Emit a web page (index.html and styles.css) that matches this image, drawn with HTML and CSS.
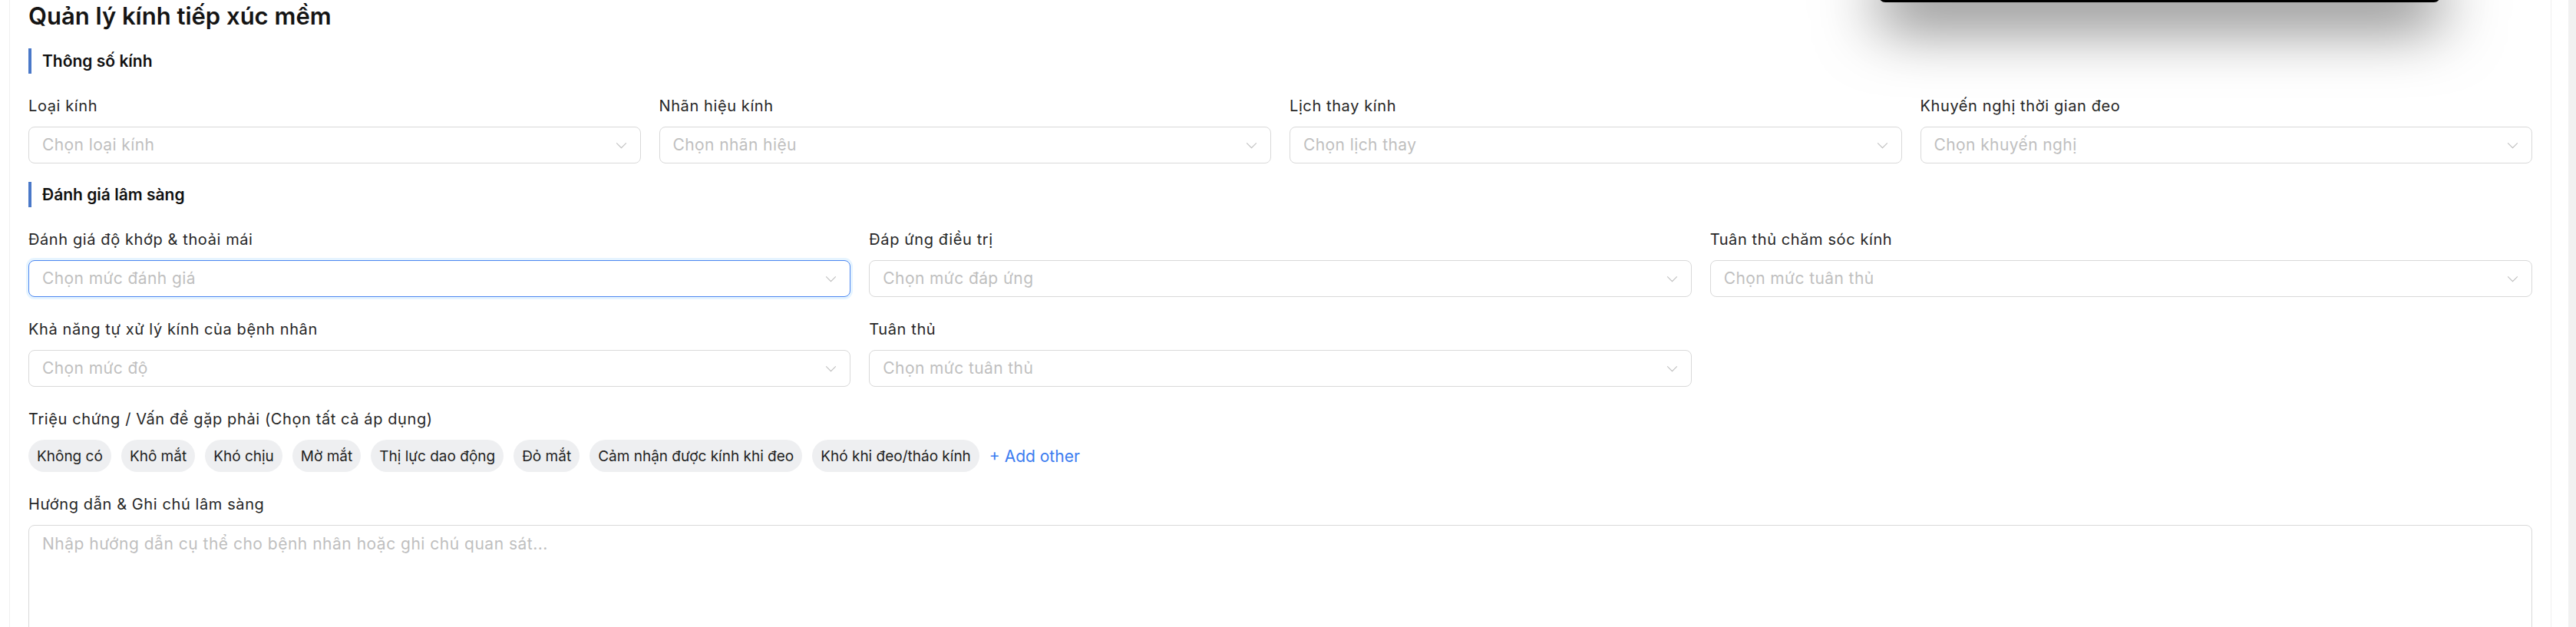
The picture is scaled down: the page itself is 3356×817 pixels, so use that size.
FILE: index.html
```html
<!DOCTYPE html>
<html lang="vi">
<head>
<meta charset="utf-8">
<title>Quản lý kính tiếp xúc mềm</title>
<link rel="stylesheet" href="styles.css">
</head>
<body>
  <main class="panel">
    <h1 class="page-title">Quản lý kính tiếp xúc mềm</h1>

    <section class="section">
      <h2 class="section-title">Thông số kính</h2>
      <div class="grid grid-4">
        <div class="field">
          <label class="field-label">Loại kính</label>
          <div class="select"><span class="placeholder">Chọn loại kính</span><svg class="chevron" viewBox="0 0 16 10"><path d="M1 1.5 8 8.5 15 1.5"/></svg></div>
        </div>
        <div class="field">
          <label class="field-label">Nhãn hiệu kính</label>
          <div class="select"><span class="placeholder">Chọn nhãn hiệu</span><svg class="chevron" viewBox="0 0 16 10"><path d="M1 1.5 8 8.5 15 1.5"/></svg></div>
        </div>
        <div class="field">
          <label class="field-label">Lịch thay kính</label>
          <div class="select"><span class="placeholder">Chọn lịch thay</span><svg class="chevron" viewBox="0 0 16 10"><path d="M1 1.5 8 8.5 15 1.5"/></svg></div>
        </div>
        <div class="field">
          <label class="field-label">Khuyến nghị thời gian đeo</label>
          <div class="select"><span class="placeholder">Chọn khuyến nghị</span><svg class="chevron" viewBox="0 0 16 10"><path d="M1 1.5 8 8.5 15 1.5"/></svg></div>
        </div>
      </div>
    </section>

    <section class="section">
      <h2 class="section-title">Đánh giá lâm sàng</h2>
      <div class="grid grid-3">
        <div class="field">
          <label class="field-label">Đánh giá độ khớp &amp; thoải mái</label>
          <div class="select is-focused"><span class="placeholder">Chọn mức đánh giá</span><svg class="chevron" viewBox="0 0 16 10"><path d="M1 1.5 8 8.5 15 1.5"/></svg></div>
        </div>
        <div class="field">
          <label class="field-label">Đáp ứng điều trị</label>
          <div class="select"><span class="placeholder">Chọn mức đáp ứng</span><svg class="chevron" viewBox="0 0 16 10"><path d="M1 1.5 8 8.5 15 1.5"/></svg></div>
        </div>
        <div class="field">
          <label class="field-label">Tuân thủ chăm sóc kính</label>
          <div class="select"><span class="placeholder">Chọn mức tuân thủ</span><svg class="chevron" viewBox="0 0 16 10"><path d="M1 1.5 8 8.5 15 1.5"/></svg></div>
        </div>
        <div class="field">
          <label class="field-label">Khả năng tự xử lý kính của bệnh nhân</label>
          <div class="select"><span class="placeholder">Chọn mức độ</span><svg class="chevron" viewBox="0 0 16 10"><path d="M1 1.5 8 8.5 15 1.5"/></svg></div>
        </div>
        <div class="field">
          <label class="field-label">Tuân thủ</label>
          <div class="select"><span class="placeholder">Chọn mức tuân thủ</span><svg class="chevron" viewBox="0 0 16 10"><path d="M1 1.5 8 8.5 15 1.5"/></svg></div>
        </div>

        <div class="field span-all">
          <label class="field-label">Triệu chứng / Vấn đề gặp phải (Chọn tất cả áp dụng)</label>
          <div class="chips">
            <span class="chip">Không có</span>
            <span class="chip">Khô mắt</span>
            <span class="chip">Khó chịu</span>
            <span class="chip">Mờ mắt</span>
            <span class="chip">Thị lực dao động</span>
            <span class="chip">Đỏ mắt</span>
            <span class="chip">Cảm nhận được kính khi đeo</span>
            <span class="chip">Khó khi đeo/tháo kính</span>
            <span class="add-other">+ Add other</span>
          </div>
        </div>

        <div class="field span-all">
          <label class="field-label">Hướng dẫn &amp; Ghi chú lâm sàng</label>
          <textarea class="notes" placeholder="Nhập hướng dẫn cụ thể cho bệnh nhân hoặc ghi chú quan sát..."></textarea>
        </div>
      </div>
    </section>
  </main>
  <div class="scroll-track"></div>

  <!-- popover hanging from the top edge -->
  <div class="popover"></div>
</body>
</html>
```

FILE: styles.css
```css
html,
body {
  margin: 0;
  height: 100%;
  overflow: hidden;
  background: #ffffff;
}

body {
  display: flex;
  position: relative;
  font-family: Inter, "Noto Sans", sans-serif;
  color: #1f1f1f;
}

.panel {
  flex: 1;
  margin-left: 12px;
  padding: 0 24px;
  border-left: 1px solid #f0f0f0;
  border-right: 1px solid #f0f0f0;
}

.scroll-track {
  width: 10px;
  margin-left: 22px;
  background: #f1f1f1;
}

.page-title {
  margin: 0;
  padding-top: 3px;
  font-size: 31px;
  line-height: 36px;
  font-weight: 600;
  color: #141414;
}

.section {
  margin-top: 24px;
}

.section-title {
  margin: 0 0 30px;
  padding-left: 14px;
  border-left: 4px solid #4a78c8;
  font-size: 21px;
  line-height: 33px;
  font-weight: 600;
  color: #111111;
}

.grid {
  display: grid;
  column-gap: 24px;
  row-gap: 30px;
}

.grid-4 {
  grid-template-columns: repeat(4, 1fr);
}

.grid-3 {
  grid-template-columns: repeat(3, 1fr);
}

.span-all {
  grid-column: 1 / -1;
}

.field {
  display: flex;
  flex-direction: column;
  min-width: 0;
}

.field-label {
  margin-bottom: 15px;
  font-size: 20px;
  line-height: 24px;
  letter-spacing: 0.6px;
  color: #262626;
}

.select {
  display: flex;
  align-items: center;
  justify-content: space-between;
  height: 48px;
  box-sizing: border-box;
  padding: 0 17px;
  border: 1px solid #d9d9d9;
  border-radius: 8px;
  background: #ffffff;
}

.select.is-focused {
  border-color: #4c87f0;
  box-shadow: 0 0 0 3px rgba(5, 145, 255, 0.1);
}

.placeholder {
  font-size: 21px;
  line-height: 24px;
  letter-spacing: 0.4px;
  color: #bfbfbf;
}

.chevron {
  width: 15px;
  height: 9px;
  fill: none;
  stroke: #bfbfbf;
  stroke-width: 1.2;
}

.chips {
  display: flex;
  flex-wrap: wrap;
  align-items: center;
  gap: 13px;
}

.chip {
  display: inline-flex;
  align-items: center;
  height: 42px;
  padding: 0 11px;
  border-radius: 21px;
  background: #eeeff1;
  font-size: 19px;
  color: #1f1f1f;
}

.add-other {
  font-size: 21px;
  color: #3b7cf0;
}

.notes {
  display: block;
  height: 180px;
  box-sizing: border-box;
  padding: 12px 17px;
  border: 1px solid #d9d9d9;
  border-radius: 8px;
  font-family: inherit;
  font-size: 21px;
  line-height: 24px;
  letter-spacing: 0.5px;
  resize: none;
  outline: none;
}

.notes::placeholder {
  color: #bfbfbf;
}

.popover {
  position: absolute;
  left: 2448px;
  top: -60px;
  width: 731px;
  height: 63px;
  border-radius: 8px;
  background: #000000;
  box-shadow: 0 30px 80px rgba(0, 0, 0, 0.55);
}
```
